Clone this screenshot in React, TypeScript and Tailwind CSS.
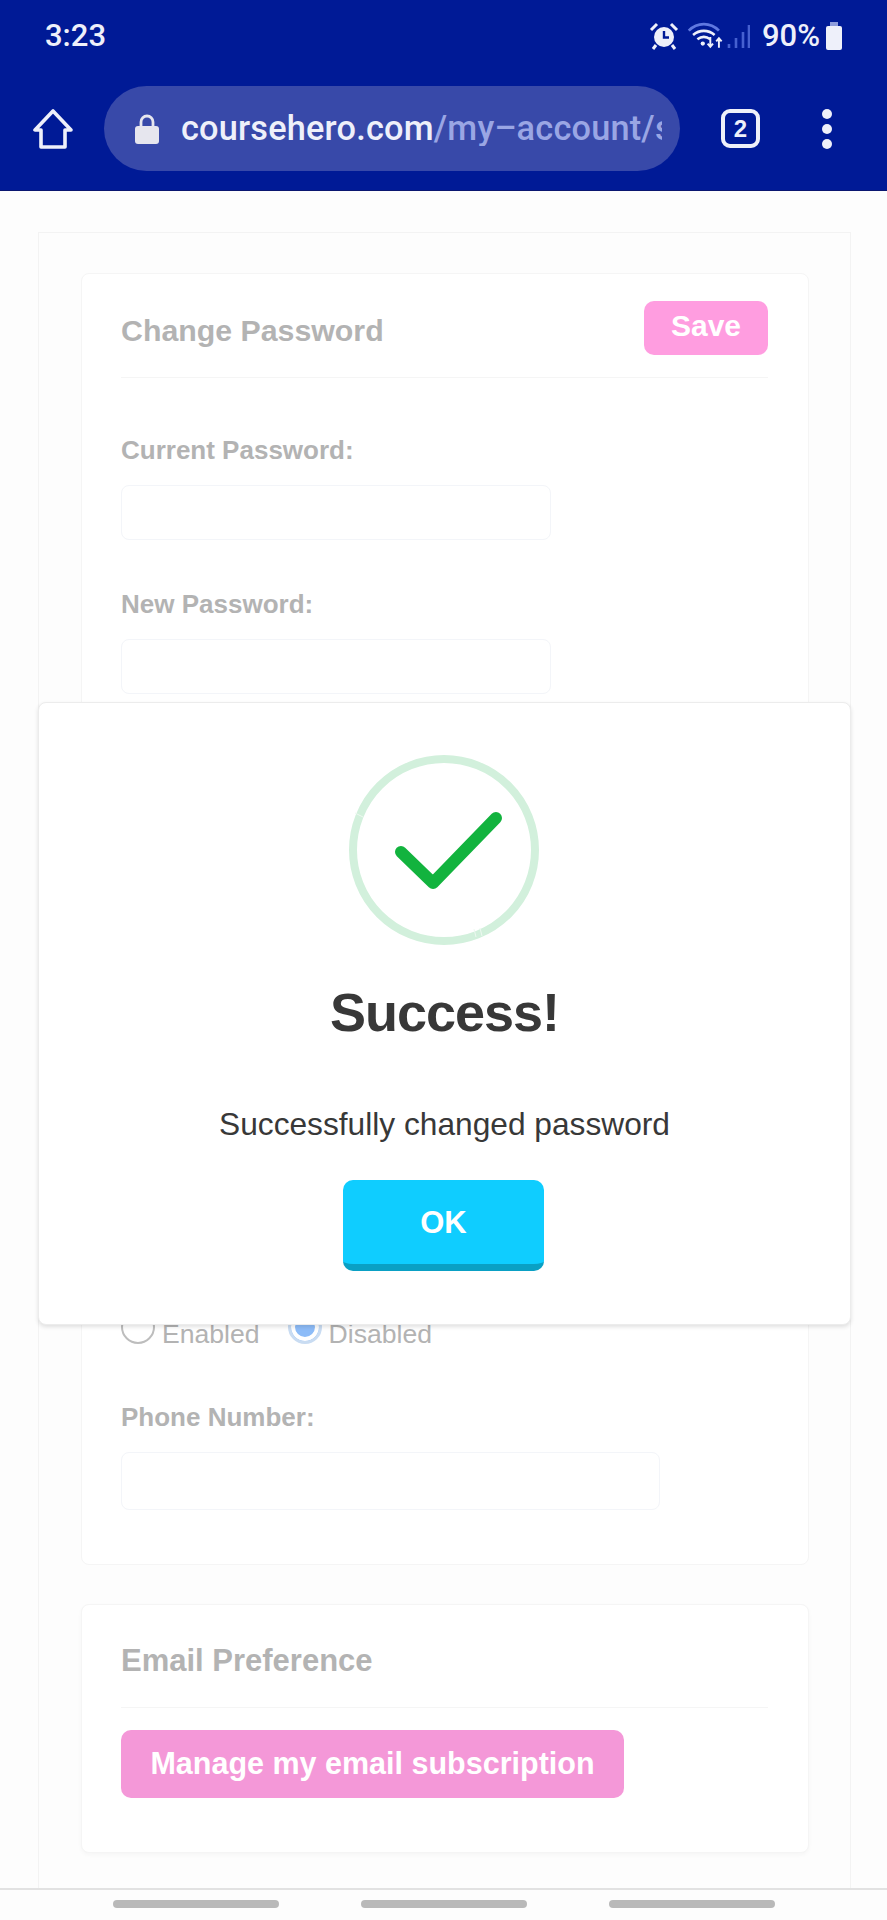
import React from 'react';

const font = 'font-["Liberation_Sans",Arial,sans-serif]';

const StatusIcons = () => (
  <div className="flex items-center">
    {/* alarm */}
    <svg width="30" height="28" viewBox="0 0 30 28" className="mr-[8px]">
      <circle cx="15" cy="15" r="10" fill="#eef0fa" />
      <path d="M15 9v6.5h5" stroke="#001a96" strokeWidth="2.4" fill="none" />
      <path d="M2 8l6-6M28 8l-6-6M7 23l-3 4M23 23l3 4" stroke="#eef0fa" strokeWidth="3" />
    </svg>
    {/* wifi */}
    <svg width="38" height="28" viewBox="0 0 34 26">
      <path d="M1 8c8-8 20-8 28 0" stroke="#5f78e0" strokeWidth="2.6" fill="none" />
      <path d="M5 12c6-5 14-5 20 0M9 16c4-3 8-3 12 0" stroke="#eef0fa" strokeWidth="2.4" fill="none" />
      <circle cx="14" cy="20" r="2" fill="#eef0fa" />
      <path d="M21 14v9M18.500 20l2.500 3 2.500-3M29 24v-9M26.500 18l2.500-3 2.500 3" stroke="#eef0fa" strokeWidth="1.800" fill="none" />
    </svg>
    {/* signal */}
    <svg width="24" height="26" viewBox="0 0 24 26" className="mx-[1px]">
      <path d="M3 25v-4M10 25v-10M17 25v-16M23 25v-23" stroke="#4560d0" strokeWidth="2.600" />
    </svg>
    <span className="ml-[11px] text-[31px] leading-none text-[#eef0fa] font-['Roboto',sans-serif] font-medium">90%</span>
    {/* battery */}
    <svg width="18" height="28" viewBox="0 0 18 28" className="ml-[5px]">
      <rect x="5" y="0" width="8" height="4" fill="#8f9ddc" />
      <rect x="1" y="4" width="16" height="24" rx="2" fill="#eef0fa" />
    </svg>
  </div>
);

const Toolbar = () => (
  <div className="flex items-center mt-[30px] pl-[33px]">
    <svg width="40" height="42" viewBox="0 0 40 42" fill="none" stroke="#eef0fa" strokeWidth="3.600" strokeLinejoin="round">
      <path d="M20 3L2 22h6v17h24V22h6z" />
    </svg>
    <div className="ml-[31px] w-[576px] h-[85px] rounded-[43px] bg-[#3849a9] flex items-center pl-[30px] overflow-hidden">
      <svg width="26" height="32" viewBox="0 0 26 32" className="shrink-0">
        <path d="M7 14V9a6 6 0 0 1 12 0v5" stroke="#e6e6ee" strokeWidth="2.800" fill="none" />
        <rect x="1" y="13" width="24" height="18" rx="3" fill="#e6e6ee" />
      </svg>
      <div className="ml-[21px] w-[481px] overflow-hidden whitespace-nowrap text-[34.300px] leading-none font-['Roboto',sans-serif] font-medium tracking-[0.2px]">
        <span className="text-[#eef0fa]">coursehero.com</span>
        <span className="text-[#9aa6e4]">/my–account/s</span>
      </div>
    </div>
    <div className="ml-[41px] w-[39px] h-[39px] rounded-[9px] border-[4px] border-[#eef0fa] flex items-center justify-center text-[#eef0fa] text-[24px] font-bold leading-none">
      2
    </div>
    <div className="ml-[62px] flex flex-col gap-[5px]">
      <div className="w-[10px] h-[10px] rounded-full bg-[#eef0fa]" />
      <div className="w-[10px] h-[10px] rounded-full bg-[#eef0fa]" />
      <div className="w-[10px] h-[10px] rounded-full bg-[#eef0fa]" />
    </div>
  </div>
);

const Field = ({ label, box }: { label: string; box: string }) => (
  <div>
    <div className="text-[26px] leading-[30px] font-bold text-[#b3b3b3]">{label}</div>
    <div className={`mt-[20px] rounded-[8px] border border-[#f3f5f9] bg-white ${box}`} />
  </div>
);

const App: React.FC = () => {
  return (
    <div className={`relative h-[1920px] w-[887px] overflow-hidden bg-[#fdfdfd] flex flex-col ${font}`}>
      <header className="h-[191px] shrink-0 bg-[#001a96] border-b border-[#0a1670]">
        <div className="flex items-center justify-between pt-[15px] pl-[45px] pr-[44px] h-[56px]">
          <span className="text-[31px] leading-none text-[#eef0fa] font-['Roboto',sans-serif] font-medium">3:23</span>
          <StatusIcons />
        </div>
        <Toolbar />
      </header>

      <main className="flex-1 min-h-0 pt-[41px] pl-[38px] pr-[36px]">
        <div className="h-full border border-[#f3f3f3] border-b-0 pt-[40px] pl-[42px] pr-[41px]">
          <section className="h-[1292px] rounded-[8px] border border-[#f5f5f5] bg-white pl-[39px] pr-[40px]">
            <div className="flex items-start justify-between h-[104px] border-b border-[#f5f5f5] pt-[27px]">
              <h2 className="mt-[14px] text-[30.300px] leading-[32px] font-bold text-[#b3b3b3]">Change Password</h2>
              <button className="w-[124px] h-[54px] rounded-[10px] bg-[#ff9de0] text-white text-[30px] font-bold leading-none pb-[4px]">
                Save
              </button>
            </div>
            <div className="pt-[57px] flex flex-col gap-[49px]">
              <Field label="Current Password:" box="w-[430px] h-[55px]" />
              <Field label="New Password:" box="w-[430px] h-[55px]" />
            </div>
            {/* rest of the form sits behind the dialog */}
            <div className="mt-[621px] flex items-center h-[40px] text-[26.600px] text-[#b3b3b3]">
              <span className="w-[34px] h-[34px] -translate-y-[8px] rounded-full border-2 border-[#bdbdbd] bg-white" />
              <span className="ml-[7px]">Enabled</span>
              <span className="ml-[28px] w-[34px] h-[34px] -translate-y-[8px] rounded-full border-[3px] border-[#c9dcf2] bg-[#8dbcf8] shadow-[inset_0_0_0_4px_#ffffff]" />
              <span className="ml-[7px]">Disabled</span>
            </div>
            <div className="mt-[47px]">
              <Field label="Phone Number:" box="w-[539px] h-[58px]" />
            </div>
          </section>

          <section className="mt-[39px] h-[249px] rounded-[8px] border border-[#f5f5f5] bg-white pl-[39px] pr-[40px] shadow-[0_2px_4px_rgba(0,0,0,0.03)]">
            <div className="h-[103px] border-b border-[#f5f5f5] pt-[40px]">
              <h2 className="text-[31px] leading-[32px] font-bold text-[#b3b3b3]">Email Preference</h2>
            </div>
            <button className="mt-[22px] w-[503px] h-[68px] rounded-[10px] bg-[#f498d8] text-white text-[30.500px] font-bold leading-none pb-[2px]">
              Manage my email subscription
            </button>
          </section>
        </div>
      </main>

      <nav className="h-[32px] shrink-0 bg-[#fdfdfd] border-t-2 border-[#e2e2e2] flex justify-center gap-[82px] pt-[10px]">
        <div className="w-[166px] h-[8px] rounded-full bg-[#b9b9b9]" />
        <div className="w-[166px] h-[8px] rounded-full bg-[#b9b9b9]" />
        <div className="w-[166px] h-[8px] rounded-full bg-[#b9b9b9]" />
      </nav>

      {/* success dialog */}
      <div className="absolute left-[38px] top-[702px] w-[813px] h-[623px] rounded-[8px] bg-white border border-[#ececec] shadow-[0_2px_4px_rgba(0,0,0,0.12)] flex flex-col items-center pt-[52px]">
        <svg width="190" height="190" viewBox="0 0 190 190" className="-ml-[2px]">
          <circle cx="95" cy="95" r="91" fill="none" stroke="#d2f0dc" strokeWidth="8" />
          <path d="M6 58l8 4M125 174l2 8M131 173l2 8" stroke="#eef9f1" strokeWidth="1" />
          <path d="M52 97l32 31 63-65" fill="none" stroke="#12b33e" strokeWidth="12" strokeLinecap="round" strokeLinejoin="round" />
        </svg>
        <h1 className="mt-[34px] text-[54px] leading-[66px] tracking-[-1px] font-bold text-[#383838]">Success!</h1>
        <p className="mt-[61px] text-[31.700px] leading-[36px] text-[#383838]">Successfully changed password</p>
        <button className="mt-[38px] -ml-[2px] w-[201px] h-[91px] rounded-[10px] bg-[#0fcdff] border-b-[7px] border-[#0aa0c4] text-white text-[31px] font-bold leading-none">
          OK
        </button>
      </div>
    </div>
  );
};

export default App;
